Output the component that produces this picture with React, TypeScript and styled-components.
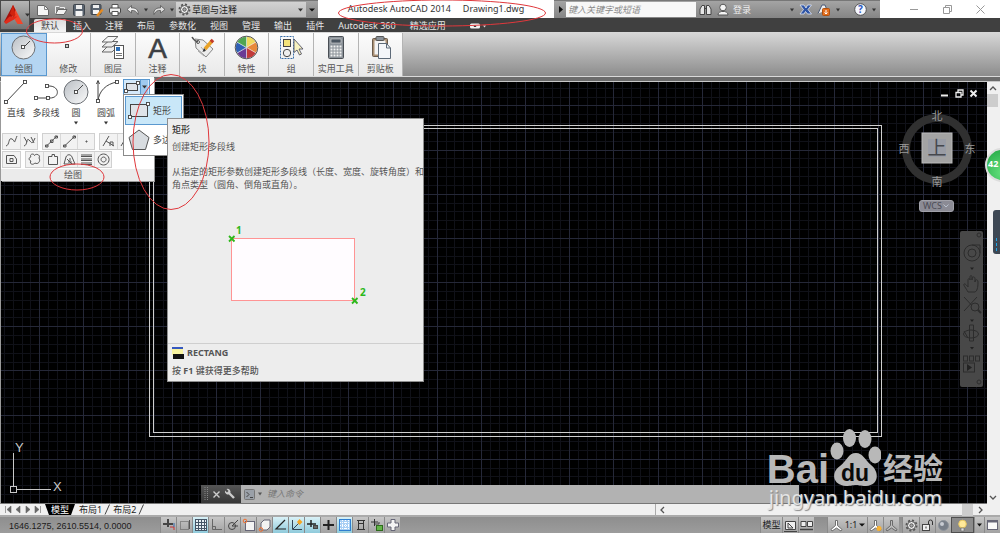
import React from "react";
import styled, { createGlobalStyle, css } from "styled-components";

const Global = createGlobalStyle`
  * { box-sizing: border-box; }
  html, body { margin: 0; padding: 0; }
  body {
    font-family: "Noto Sans", "Noto Sans CJK SC", sans-serif;
    font-size: 9px;
    line-height: 12px;
    color: #333;
    background: #000;
  }
  button, input, select { font: inherit; color: inherit; margin: 0; padding: 0; border: 0; border-radius: 0; }
  button { background: none; }
  svg { display: block; flex: none; }
`;

const chrome = css`
  background: linear-gradient(#a4a4a4, #858585);
`;

const Shell = styled.div`
  position: relative;
  display: flex;
  flex-direction: column;
  min-height: 100vh;
  overflow: hidden;
`;

/* ---------- header ---------- */
const Header = styled.header`
  display: flex;
  background: #404040;
`;
const AppButton = styled.button`
  width: 30px;
  height: 30px;
  flex: none;
  display: flex;
  align-items: center;
  gap: 2px;
  padding-left: 3px;
  border: 1px solid #4a4a4a;
  background: linear-gradient(#b5b5b5, #747474);
`;
const HeaderRows = styled.div`
  flex: 1;
  min-width: 0;
`;
const TitleBar = styled.div`
  display: flex;
  height: 18px;
  background: #fff;
`;
const QuickAccess = styled.div`
  ${chrome}
  display: flex;
  align-items: center;
  width: 288px;
  flex: none;
  border-top: 1px solid #777;
`;
const QuickTools = styled.div`
  display: flex;
  align-items: center;
  gap: 4px;
  width: 146px;
  padding-left: 6px;
`;
const IconButton = styled.button`
  display: flex;
  align-items: center;
  justify-content: center;
`;
const Workspace = styled.label`
  display: flex;
  align-items: center;
  gap: 1px;
  width: 130px;
  height: 15px;
  padding: 0 3px 0 2px;
  background: linear-gradient(#d2d2d2, #bdbdbd);
  select {
    flex: 1;
    min-width: 0;
    height: 13px;
    line-height: 13px;
    appearance: none;
    background: transparent;
    color: #222;
  }
`;
const MoreButton = styled(IconButton)`
  flex: 1;
  height: 17px;
`;
const Title = styled.div`
  flex: 1;
  display: flex;
  justify-content: center;
  gap: 12px;
  line-height: 18px;
  color: #333;
  white-space: nowrap;
`;
const InfoCenter = styled.div`
  ${chrome}
  display: flex;
  align-items: center;
  width: 326px;
  flex: none;
  border-top: 1px solid #777;
`;
const SearchToggle = styled(IconButton)`
  width: 12px;
  height: 15px;
`;
const SearchInput = styled.input`
  width: 130px;
  height: 15px;
  padding-left: 2px;
  background: #f7f7f7;
  font-style: italic;
  &::placeholder { color: #888; opacity: 1; }
`;
const InfoTools = styled.div`
  display: flex;
  flex: 1;
  align-items: center;
  padding: 0 4px 0 3px;
  gap: 5px;
`;
const SignIn = styled.button`
  display: flex;
  flex: 1;
  align-items: center;
  gap: 4px;
  color: #eee;
  white-space: nowrap;
`;
const WindowButtons = styled.div`
  display: flex;
  align-items: center;
  justify-content: space-around;
  width: 120px;
  flex: none;
  padding: 0 3px 0 18px;
`;

const TabRow = styled.nav`
  display: flex;
  height: 14px;
  padding-left: 4px;
  align-items: flex-end;
`;
const Tab = styled.button<{ $active?: boolean }>`
  height: 13px;
  padding: 0 7px;
  line-height: 13px;
  color: #e6e6e6;
  white-space: nowrap;
  ${(p) => p.$active && css`
    color: #444;
    background: linear-gradient(#dcdcdc, #f4f4f4);
    border-radius: 2px 2px 0 0;
  `}
`;

/* ---------- ribbon ---------- */
const Ribbon = styled.div`
  position: relative;
  z-index: 5;
  background: linear-gradient(#d8d8d8, #8c8c8c);
  border-bottom: 1px solid #dadada;
`;
const RibbonPanels = styled.div`
  display: flex;
  width: 403px;
  height: 44px;
  padding: 1px 0 0 1px;
`;
const PanelButton = styled.button<{ $active?: boolean }>`
  flex: 1;
  display: flex;
  flex-direction: column;
  align-items: center;
  justify-content: space-between;
  padding: 2px 0 1px;
  color: #555;
  background: linear-gradient(#fcfcfc, #e9e9e9);
  border-right: 1px solid #b4b4b4;
  ${(p) => p.$active && css`
    background: #b4d5f2;
    border: 1px solid #5a98cf;
    padding: 1px 0 0;
  `}
`;
const RibbonEdge = styled.div`
  height: 5px;
  background: #6c6c6c;
  border-bottom: 1px solid #c8c8c8;
`;

/* ---------- draw panel ---------- */
const DrawPanel = styled.section`
  position: absolute;
  top: 45px;
  left: 1px;
  width: 153px;
  background: #fff;
  box-shadow: 1px 1px 0 #999;
`;
const DrawMain = styled.div`
  display: flex;
  height: 56px;
  padding: 2px 0 0 0;
`;
const BigTool = styled.button`
  display: flex;
  flex-direction: column;
  align-items: center;
  justify-content: flex-start;
  width: 30px;
  gap: 2px;
  color: #444;
  white-space: nowrap;
`;
const SplitButton = styled.button`
  display: flex;
  align-items: center;
  width: 27px;
  height: 16px;
  margin-left: 2px;
  border: 1px solid #5a98cf;
  background: #d4e9fa;
  svg + svg {
    box-sizing: content-box;
    padding: 5px 1px;
    border-left: 1px solid #5a98cf;
    background: #9fcaf0;
  }
`;
const SmallRow = styled.div`
  display: flex;
  gap: 4px;
  height: 18px;
  padding-left: 1px;
`;
const SmallGroup = styled.div`
  display: flex;
  height: 17px;
  border: 1px solid #d0d0d0;
  background: #f2f2f2;
`;
const SmallTool = styled.button`
  display: flex;
  width: 17px;
  align-items: center;
  justify-content: center;
  & + & { border-left: 1px solid #d8d8d8; }
`;
const PanelTitle = styled.div`
  height: 12px;
  padding-right: 9px;
  text-align: center;
  background: #ebebeb;
  color: #555;
`;
const Flyout = styled.div`
  position: absolute;
  top: 62px;
  left: 123px;
  width: 61px;
  padding: 1px;
  background: #fff;
  border: 1px solid #8a8a8a;
`;
const FlyoutItem = styled.button<{ $hot?: boolean }>`
  display: flex;
  align-items: center;
  gap: 3px;
  width: 100%;
  height: 29px;
  padding-left: 3px;
  overflow: hidden;
  white-space: nowrap;
  color: #444;
  ${(p) => p.$hot && css`
    background: #c9e7f8;
    outline: 1px solid #5a98cf;
    outline-offset: -1px;
  `}
`;

/* ---------- tooltip ---------- */
const Tooltip = styled.aside`
  position: absolute;
  top: 86px;
  left: 167px;
  width: 257px;
  background: #ededed;
  border: 1px solid #8e8e8e;
  color: #555;
  h3 { margin: 0; padding: 4px 4px 0; font-size: 9px; line-height: 13px; font-weight: 500; color: #333; }
  p { margin: 0; padding: 4px 0 0 4px; line-height: 13px; }
  p + p { padding-top: 12px; white-space: nowrap; }
`;
const Figure = styled.div`
  height: 152px;
  padding: 30px 0 0 55px;
`;
const TooltipFoot = styled.footer`
  border-top: 1px solid #cfcfcf;
  padding: 3px 4px 4px;
  font-weight: 700;
  color: #555;
  line-height: 12px;
  div { display: flex; align-items: center; gap: 3px; margin-bottom: 6px; }
  span { font-weight: 500; }
`;

/* ---------- workspace ---------- */
const Body = styled.main`
  position: relative;
  display: flex;
  flex: 1;
  min-height: 421px;
`;
const Canvas = styled.div`
  position: relative;
  flex: 1;
  overflow: hidden;
  background: #000;
  border-left: 1px solid #999;
  border-bottom: 1px solid #777;
`;
const Drawing = styled.svg`
  position: absolute;
  width: 100%;
  height: 100%;
`;
const Floating = styled.div<{ $top?: number; $right?: number; $bottom?: number; $left?: number }>`
  position: absolute;
  ${(p) => p.$top !== undefined && `top: ${p.$top}px;`}
  ${(p) => p.$right !== undefined && `right: ${p.$right}px;`}
  ${(p) => p.$bottom !== undefined && `bottom: ${p.$bottom}px;`}
  ${(p) => p.$left !== undefined && `left: ${p.$left}px;`}
`;
const DocButtons = styled(Floating)`
  display: flex;
  gap: 5px;
`;
const Wcs = styled.button`
  display: flex;
  align-items: center;
  justify-content: space-between;
  width: 35px;
  height: 12px;
  padding: 0 4px 0 3px;
  line-height: 10px;
  color: #4c4c55;
  background: #8b8b95;
  border: 1px solid #a2a2aa;
  border-radius: 3px;
`;
const CommandLine = styled.div`
  position: absolute;
  left: 200px;
  right: 188px;
  bottom: 0;
  height: 18px;
  display: flex;
  background: #b2b2b2;
`;
const CommandGrip = styled.div`
  display: flex;
  align-items: center;
  gap: 4px;
  width: 40px;
  padding-left: 3px;
  background: linear-gradient(#565656, #363636);
`;
const GripButton = styled(IconButton)`
  width: 12px;
`;
const CommandField = styled.label`
  flex: 1;
  display: flex;
  align-items: center;
  padding-left: 3px;
  gap: 3px;
  input {
    flex: 1;
    margin-left: 2px;
    background: transparent;
    font-style: italic;
  }
  input::placeholder { color: #777; opacity: 1; }
`;
const Watermark = styled(Floating)`
  z-index: 4;
  color: #b8b8b8;
  font-family: "Liberation Sans", "Noto Sans CJK SC", sans-serif;
  font-weight: 700;
  pointer-events: none;
`;
const Brand = styled.div`
  display: flex;
  align-items: flex-end;
  height: 58px;
  font-size: 40px;
  line-height: 34px;
`;
const BrandCn = styled.span`
  font-size: 30px;
  margin-left: 2px;
`;
const Url = styled.div`
  padding-left: 2px;
  font-family: "Noto Sans", sans-serif;
  font-weight: 400;
  font-size: 20px;
  line-height: 24px;
  color: #e4e4e4;
  text-shadow: 1px 1px 1px #888;
`;
const VScroll = styled.div`
  width: 13px;
  display: flex;
  flex-direction: column;
  align-items: flex-start;
  background: #f0f0f0;
`;
const ScrollButton = styled(IconButton)`
  width: 11px;
  height: 12px;
`;
const Thumb = styled.div`
  width: 11px;
  height: 13px;
  background: #cdcdcd;
`;
const Spacer = styled.div`
  flex: 1;
`;

/* ---------- bottom rows ---------- */
const LayoutRow = styled.div`
  display: flex;
  height: 13px;
  align-items: center;
  background: #f0f0f0;
  border-bottom: 2px solid #aaa;
`;
const LayoutNav = styled.div`
  display: flex;
  width: 45px;
  padding-left: 3px;
`;
const NavButton = styled(IconButton)`
  width: 10px;
  height: 11px;
`;
const LayoutTab = styled.button<{ $active?: boolean }>`
  height: 11px;
  line-height: 11px;
  white-space: nowrap;
  color: #222;
  ${(p) => p.$active && css`
    padding: 0 6px;
    color: #fff;
    background: #000;
    clip-path: polygon(0 0, 100% 0, calc(100% - 4px) 100%, 4px 100%);
  `}
`;
const HScroll = styled.div`
  display: flex;
  align-items: center;
  width: 345px;
  height: 11px;
  margin-left: auto;
  padding-right: 14px;
  border-left: 1px solid #aaa;
`;
const StatusBar = styled.footer`
  display: flex;
  height: 16px;
  background: linear-gradient(#8e8e8e, #9c9c9c);
`;
const Coordinates = styled.output`
  width: 160px;
  padding-left: 9px;
  font-family: "Liberation Sans", sans-serif;
  line-height: 18px;
  color: #1c1c1c;
`;
const StatusButton = styled.button<{ $on?: boolean; $w?: number; $down?: boolean }>`
  display: flex;
  align-items: center;
  justify-content: center;
  gap: 2px;
  width: ${(p) => p.$w ?? 16}px;
  color: #222;
  white-space: nowrap;
  border-left: 1px solid #8a8a8a;
  background: ${(p) => (p.$on ? "linear-gradient(#d9f1f7, #8fcadb)" : p.$down ? "#8b8b8b" : "linear-gradient(#c6c6c6, #a2a2a2)")};
  ${(p) => p.$down && "border: 1px solid #4f4f4f;"}
`;
const StatusGap = styled.div<{ $w: number }>`
  width: ${(p) => p.$w}px;
`;

/* ---------- overlays ---------- */
const Marks = styled.svg`
  position: absolute;
  top: 0;
  left: 0;
  z-index: 10;
  pointer-events: none;
`;
const Ball = styled.div`
  position: absolute;
  top: 148px;
  right: -19px;
  width: 34px;
  height: 34px;
  padding-left: 1px;
  border: 2px solid #ddd;
  border-radius: 50%;
  background: radial-gradient(circle at 50% 75%, #62e07c, #23a644);
  color: #fff;
  font-weight: 700;
  line-height: 28px;
  z-index: 6;
`;
const SideHandle = styled.div`
  position: absolute;
  top: 210px;
  right: 0;
  width: 7px;
  height: 44px;
  padding: 28px 2px 3px 3px;
  border-radius: 3px 0 0 3px;
  background: #3e4854;
  z-index: 6;
  &::after { content: ""; display: block; height: 13px; border-left: 1px dashed #1fa5e8; }
`;

/* ---------- icons ---------- */
type IcoProps = { w?: number; h?: number; children: React.ReactNode };
const Ico = ({ w = 14, h = 14, children }: IcoProps) => (
  <svg width={w} height={h} viewBox={`0 0 ${w} ${h}`} fill="none" stroke="#444" aria-hidden="true">
    {children}
  </svg>
);
const Caret = ({ c = "#333", s = 5 }: { c?: string; s?: number }) => (
  <Ico w={s} h={4}><path d={`M0 0.5H${s}L${s / 2} 3.5Z`} fill={c} stroke="none" /></Ico>
);
const Node = ({ x, y }: { x: number; y: number }) => (
  <rect x={x - 1.5} y={y - 1.5} width="3" height="3" fill="#fff" stroke="#444" strokeWidth=".9" />
);
const DiscFill = () => (
  <defs>
    <linearGradient id="disc" x1="0" y1="0" x2="1" y2="1">
      <stop offset="0" stopColor="#b9bec4" /><stop offset="1" stopColor="#fbfbfb" />
    </linearGradient>
  </defs>
);

const Logo = () => (
  <Ico w={19} h={20}>
    <path d="M9 0L19 19H13.5L9.5 12.500Z" fill="#f2452a" stroke="none" />
    <path d="M9 0L0 17L6.500 14.500L11.500 5Z" fill="#a50f0a" stroke="none" />
    <path d="M0 17L5.500 11.500H13.500L10 14.500L2 19Z" fill="#e02b1a" stroke="none" />
    <path d="M9 0L6 8.500L9.500 12.500L11.500 10Z" fill="#d0230f" stroke="none" />
  </Ico>
);
const quick: React.ReactNode[] = [
  <Ico w={14} h={14}><path d="M1.500 2.500H8.500L12.500 6.500V12.500H1.500Z" fill="#f6f6f6" stroke="#666" /><path d="M8.500 2.500V6.500H12.500" stroke="#888" /></Ico>,
  <Ico w={14} h={14}><path d="M1.500 11.500V3.500H5L6 4.500H10.500V6" stroke="#eee" fill="#888" /><path d="M1.500 11.500L4 6.500H13L10 11.500Z" fill="#f2f2f2" stroke="#666" /></Ico>,
  <Ico w={14} h={14}><rect x="1.500" y="1.500" width="11" height="11" rx="1" fill="#5a6470" stroke="#3f454c" /><rect x="4" y="2" width="6" height="4" fill="#eee" stroke="none" /><rect x="3.500" y="8" width="7" height="5" fill="#f4f4f4" stroke="none" /></Ico>,
  <Ico w={14} h={14}><rect x="1" y="1.500" width="10" height="10" rx="1" fill="#5a6470" stroke="#3f454c" /><rect x="3" y="2" width="6" height="3" fill="#eee" stroke="none" /><rect x="3" y="7" width="6" height="4" fill="#f4f4f4" stroke="none" /><path d="M7 13L12.500 6.500" stroke="#e58a20" strokeWidth="2.500" /></Ico>,
  <Ico w={14} h={14}><path d="M4 5V1.500H10V5" fill="#fff" stroke="#555" /><rect x="1.500" y="5" width="11" height="5" rx="1" fill="#eee" stroke="#444" /><path d="M4 8.500H10V12.500H4Z" fill="#fff" stroke="#555" /></Ico>,
  <Ico w={14} h={14}><path d="M12 11.500C13 6.500 9 4.500 5.500 5V2.500L1 6.500L5.500 10V7.500C8.500 7 10.500 8.500 12 11.500Z" fill="#eee" stroke="#555" strokeWidth=".8" /></Ico>,
];

const DiscIcon = ({ s = 25 }: { s?: number }) => (
  <Ico w={s} h={s}>
    <DiscFill />
    <circle cx={s / 2} cy={s / 2} r={s / 2 - 1} fill="url(#disc)" stroke="#6b6f74" />
    <path d={`M${s / 2} ${s / 2}L${s - 6} 6`} stroke="#444" />
    <Node x={Math.floor(s / 2)} y={Math.floor(s / 2)} />
  </Ico>
);
const panels: { label: string; icon: React.ReactNode }[] = [
  { label: "绘图", icon: <DiscIcon /> },
  { label: "修改", icon: <Ico w={25} h={25}><rect x="9.500" y="9.500" width="3" height="3" fill="#ccc" /></Ico> },
  {
    label: "图层",
    icon: (
      <Ico w={25} h={25}>
        <path d="M2 17L8 11H18L12 17Z" fill="#eee" stroke="#666" /><path d="M2 12L8 6.500H18L12 12Z" fill="#eee" stroke="#666" /><path d="M2 7L8 1.500H18L12 7Z" fill="#f6f6f6" stroke="#666" />
        <rect x="14.500" y="10.500" width="9" height="13" fill="#fff" stroke="#555" /><rect x="16" y="12" width="4" height="4" fill="#2c6fb8" stroke="none" /><path d="M16 18.500H22M16 20.500H22" stroke="#777" />
      </Ico>
    ),
  },
  { label: "注释", icon: <Ico w={25} h={25}><text x="12.500" y="23" textAnchor="middle" fontFamily="Liberation Sans, sans-serif" fontSize="28" fill="#3c3f44" stroke="#3c3f44" strokeWidth=".6">A</text></Ico> },
  {
    label: "块",
    icon: (
      <Ico w={25} h={25}>
        <path d="M5 4L13 5L23 14L16 22L6 13Z" fill="#ececec" stroke="#888" /><circle cx="8" cy="7" r="1.500" fill="#fff" stroke="#555" /><path d="M8 7C5 6 3 4 2 2" stroke="#555" strokeWidth="1.500" />
        <path d="M11 12L15 17M8 16L14 21" stroke="#aaa" /><path d="M15 14L22 6" stroke="#e9a227" strokeWidth="3.500" /><path d="M21 7L23 5" stroke="#c0392b" strokeWidth="3.500" /><path d="M12.500 17L14 13L16 15.500Z" fill="#333" stroke="none" />
      </Ico>
    ),
  },
  {
    label: "特性",
    icon: (
      <Ico w={25} h={25}>
        {["#f0d95c", "#e8893a", "#c23a3a", "#6a3a94", "#2f5fb5", "#4fa552"].map((c, i) => {
          const a = ((i * 60 - 90) * Math.PI) / 180;
          const b = a + Math.PI / 3;
          const pt = (t: number) => `${12.5 + 11 * Math.cos(t)} ${12.5 + 11 * Math.sin(t)}`;
          return <path key={c} d={`M12.5 12.5L${pt(a)}A11 11 0 0 1 ${pt(b)}Z`} fill={c} stroke="#eee" strokeWidth=".5" />;
        })}
        <circle cx="12.500" cy="12.500" r="11.300" stroke="#555" />
      </Ico>
    ),
  },
  {
    label: "组",
    icon: (
      <Ico w={25} h={25}>
        <rect x="1.500" y="1.500" width="13" height="22" stroke="#3a6ea8" strokeDasharray="2 1" /><rect x="4.500" y="4.500" width="7" height="7" fill="#f2e27a" stroke="#444" /><circle cx="8" cy="18" r="3.700" fill="#eee" stroke="#444" />
        <path d="M15 4V17.500L18 15L20.500 20L22.500 19L20 14H24Z" fill="#f7f2c0" stroke="#556" strokeWidth=".9" />
      </Ico>
    ),
  },
  {
    label: "实用工具",
    icon: (
      <Ico w={25} h={25}>
        <rect x="5.500" y="1.500" width="15" height="22" rx="1" fill="#8b9299" stroke="#4a4f55" /><rect x="8" y="4" width="10" height="4" fill="#4a5560" stroke="#ddd" strokeWidth=".6" />
        {[11, 14, 17, 20].map((y) => [8, 11, 14, 17].map((x) => <rect key={`${x}-${y}`} x={x - 0.5} y={y - 0.5} width="2" height="2" fill="#f2f2f2" stroke="none" />))}
      </Ico>
    ),
  },
  {
    label: "剪贴板",
    icon: (
      <Ico w={25} h={25}>
        <rect x="4.500" y="3.500" width="15" height="18" rx="1" fill="#a98f73" stroke="#6a5b4c" /><rect x="6.500" y="5.500" width="11" height="14" fill="#f4f4f4" stroke="none" /><rect x="8" y="1.500" width="8" height="4" rx="1" fill="#8b9299" stroke="#555" />
        <path d="M10.500 8.500H18.500L22.500 13V23.500H10.500Z" fill="#f4f6f9" stroke="#5d6a78" /><path d="M18.500 8.500V13H22.500" stroke="#5d6a78" />
      </Ico>
    ),
  },
];

const bigTools = [
  { label: "直线", arrow: false, icon: <Ico w={26} h={26}><path d="M3 23L22 3" /><Node x={3} y={23} /><Node x={22} y={3} /></Ico> },
  { label: "多段线", arrow: false, icon: <Ico w={26} h={26}><path d="M3 19H17C27 19 27 7 16 7H14" /><Node x={3} y={19} /><Node x={15} y={19} /><Node x={14} y={7} /></Ico> },
  { label: "圆", arrow: true, icon: <DiscIcon s={26} /> },
  { label: "圆弧", arrow: true, icon: <Ico w={26} h={26}><path d="M5 22C6 12 13 5 24 3M5 2V23M3.500 5L5 1.500L6.500 5" /><Node x={5} y={22} /><Node x={24} y={3} /></Ico> },
];
const RectIcon = ({ w, h }: { w: number; h: number }) => (
  <Ico w={w} h={h}>
    <rect x="2.500" y="2.500" width={w - 5} height={h - 5} fill="#dfe3e8" stroke="#444" /><Node x={2} y={h - 2} /><Node x={w - 2} y={2} />
  </Ico>
);

const smallRows: string[][][] = [
  [
    ["M1 11C5 10 3 2 7 4S8 11 12 1", "M1 11C5 10 3 2 6 5S9 10 12 3M1 2L4 7M8 2L11 8"],
    ["M1 11.500L12 1M0.500 10H3V12H0.500ZM5.500 5H8V7.500H5.500ZM10 1H12.500V3H10Z", "M1 11.500L12 1M0.500 10H3V12H0.500ZM10 1H12.500V3H10Z", "M6 6H7V7H6Z"],
    ["M1 11L7 1M4 6L12 11M8 11V7H11V11", "M1 11L7 1M4 6L12 11"],
  ],
  [
    ["M1.500 2.500H9L11.500 6V10.500H1.500ZM5 5.500H8V8.500H5Z"],
    [
      "M3 4C1 1 6 0 6.500 2.500C8 0 13 2 11 5C13 8 10 12 7 10C4 13 1 10 3 8C0 7 1 4 3 4",
      "M2.500 3.500H6V1.500H8.500V3.500H11.500V11.500H2.500Z",
      "M1 11L3 4C4 1 8 1 9 4L12 11ZM4 6L9 11M5 9H9M7 5V8",
      "M1 2H12M1 3.500H12M1 6H12M1 7.500H12M1 10H12M1 11.500H12",
      "M6.500 1A5.500 5.500 0 1 0 6.600 1ZM6.500 4A2.500 2.500 0 1 0 6.600 4Z",
    ],
  ],
];

const StatusIcons: { on?: boolean; el: React.ReactNode }[] = [
  { el: <><path d="M1 6H11M6 1V9" stroke="#444" strokeWidth="2" /><path d="M8 9H12V12" stroke="#c33" /><path d="M12 5V9" stroke="#36a" /></> },
  { el: <><rect x="2.500" y="3.500" width="8" height="8" stroke="#555" strokeDasharray="1 1" /><path d="M11.500 2V11" stroke="#555" /></> },
  { on: true, el: <><rect x="1" y="1" width="12" height="12" fill="#e8f0f4" stroke="none" /><path d="M1.500 1V13M4.500 1V13M7.500 1V13M10.500 1V13M12.500 1V13M1 1.500H13M1 4.500H13M1 7.500H13M1 10.500H13M1 12.500H13" stroke="#455566" /></> },
  { el: <path d="M2.500 1V11.500H12M2.500 8.500H5.500V11.500" stroke="#666" /> },
  { el: <><circle cx="6" cy="8" r="3.500" /><path d="M6 8L12 2M6 8H12" /></> },
  { el: <><rect x="3.500" y="3.500" width="9" height="9" fill="#f3f3f3" stroke="#667" /><circle cx="3" cy="3" r="1.800" stroke="#f07030" /></> },
  { el: <><path d="M3 5L6 2H12V9L9 12H3Z" fill="#f3f3f3" stroke="#667" /><circle cx="3" cy="11.500" r="1.800" stroke="#f07030" /></> },
  { on: true, el: <path d="M11 2L2 11H12" stroke="#222" strokeWidth="1.200" /> },
  { on: true, el: <><path d="M2.500 2V11.500H12M3 11L10 4" stroke="#345" /><path d="M9.500 1L12.500 4L9.500 7L7 4Z" fill="#f5a623" stroke="none" /></> },
  { on: true, el: <><path d="M1 6H10M5 2V9" stroke="#222" strokeWidth="1.500" /><rect x="7.500" y="7.500" width="4" height="3" fill="#666" /></> },
  { el: <path d="M1 7H12M6.500 2V12" stroke="#222" strokeWidth="2" /> },
  { on: true, el: <><rect x="1.500" y="1.500" width="11" height="11" fill="#a8cff5" stroke="#2f7fd0" /><path d="M2 4.500H12M2 7.500H12M2 10.500H12M4.500 2V12M7.500 2V12M10.500 2V12" stroke="#fff" strokeDasharray="1 1" /></> },
  { el: <path d="M3 2.500H11M4.500 2.500V11.500M9.500 2.500V11.500M3 11.500H11M4.500 5.500H9.500" stroke="#333" /> },
  { el: <><path d="M1 4H8M4.500 1V8" stroke="#333" /><path d="M5 6H9V4" /><rect x="6.500" y="7.500" width="6" height="5" fill="#63b548" stroke="#2d6b1c" /></> },
  { el: <path d="M5 1.500H9V5H12.500V9H9V12.500H5V9H1.500V5H5Z" fill="#f4f4f4" stroke="#667" /> },
];
const Gear = () => (
  <Ico w={13} h={13}>
    <circle cx="6.500" cy="6.500" r="5" stroke="#555" strokeWidth="2" strokeDasharray="2 1.900" /><circle cx="6.500" cy="6.500" r="4" fill="#f2f2f2" stroke="#555" /><circle cx="6.500" cy="6.500" r="1.700" fill="#aaa" stroke="#555" />
  </Ico>
);
const ScaleIcon = ({ c = "#fff", star = false }: { c?: string; star?: boolean }) => (
  <Ico w={13} h={13}>
    <path d="M5.500 1.500H7.500V6.500L12 10.500L11 12L6.500 9L2 12L1 10.500L5.500 6.500Z" fill={c} stroke="#555" strokeWidth=".8" />
    {star && <circle cx="10" cy="9.500" r="2.500" fill="#f9b233" stroke="none" />}
  </Ico>
);

const step = 44.17;
const grid = (from: number, count: number) =>
  Array.from({ length: count }, (_, i) => ({ at: from + (i * step) / 5, major: i % 5 === 0 }));
const columns = grid(-4.5, 330);
const rows = grid(61.8, 200);

const tabs = ["默认", "插入", "注释", "布局", "参数化", "视图", "管理", "输出", "插件", "Autodesk 360", "精选应用"];

export default function App() {
  return (
    <Shell>
      <Global />
      <Header>
        <AppButton aria-label="应用程序"><Logo /><Caret s={5} /></AppButton>
        <HeaderRows>
          <TitleBar>
            <QuickAccess>
              <QuickTools>
                {quick.map((q, i) => <IconButton key={i} aria-label={`工具 ${i + 1}`}>{q}</IconButton>)}
                <Caret s={4} />
                <IconButton aria-label="重做">
                  <Ico w={14} h={14}><path d="M2 11.500C1 6.500 5 4.500 8.500 5V2.500L13 6.500L8.500 10V7.500C5.500 7 3.500 8.500 2 11.500Z" fill="#ddd" stroke="#555" strokeWidth=".8" /></Ico>
                </IconButton>
                <Caret s={4} />
              </QuickTools>
              <Workspace>
                <Gear />
                <select aria-label="工作空间"><option>草图与注释</option></select>
                <Caret s={5} />
              </Workspace>
              <MoreButton aria-label="自定义"><Caret s={6} c="#111" /></MoreButton>
            </QuickAccess>
            <Title><span>Autodesk AutoCAD 2014</span><span>Drawing1.dwg</span></Title>
            <InfoCenter>
              <SearchToggle aria-label="展开"><Ico w={5} h={7}><path d="M1 0L5 3.500L1 7Z" fill="#111" stroke="none" /></Ico></SearchToggle>
              <SearchInput aria-label="搜索" placeholder="键入关键字或短语" />
              <InfoTools>
                <IconButton aria-label="查找"><Ico w={13} h={13}><path d="M1 11.500V6L3 2.500H5.500V11.500ZM7.500 11.500V2.500H10L12 6V11.500ZM5 5.500H8" fill="#e6e6e6" stroke="#444" /></Ico></IconButton>
                <SignIn>
                  <Ico w={12} h={13}><circle cx="6" cy="4.500" r="3.300" fill="#f4f4f4" stroke="#555" /><path d="M1 12C1 9 3.500 9 4.500 8.500H7.500C8.500 9 11 9 11 12Z" fill="#f4f4f4" stroke="#555" /></Ico>
                  登录
                </SignIn>
                <Caret s={4} />
                <IconButton aria-label="Exchange"><Ico w={13} h={13}><path d="M1 2H5L7 5L8.500 2H12.500L9 6.500L12.500 11H8.500L6.500 8.500L5 11H1L4.500 6.500Z" fill="#2f55a5" stroke="#dfe6f5" strokeWidth=".8" /></Ico></IconButton>
                <IconButton aria-label="连接"><Ico w={14} h={13}><path d="M1 10.500L5 2H8L10 7" fill="#eee" stroke="#4a5a78" /><rect x="5.500" y="5.500" width="7" height="7" rx="1" fill="#e4701e" stroke="#b14f0c" /><path d="M9 7V11M7.500 9.500L9 11L10.500 9.500" stroke="#fff" /></Ico></IconButton>
                <Caret s={4} />
                <StatusGap $w={4} />
                <IconButton aria-label="帮助"><Ico w={13} h={13}><circle cx="6.500" cy="6.500" r="5.800" fill="#f6f8ff" stroke="#555" /><text x="6.500" y="10" fontSize="10" fontWeight="700" textAnchor="middle" fill="#2a57c0" stroke="none">?</text></Ico></IconButton>
                <Caret s={4} />
              </InfoTools>
            </InfoCenter>
            <WindowButtons>
              <IconButton aria-label="最小化"><Ico w={9} h={9}><path d="M0 4.500H8" stroke="#999" /></Ico></IconButton>
              <IconButton aria-label="还原"><Ico w={9} h={9}><path d="M0.500 2.500H6.500V8.500H0.500ZM2.500 2V0.500H8.500V6.500H7" stroke="#999" /></Ico></IconButton>
              <IconButton aria-label="关闭"><Ico w={9} h={9}><path d="M0.500 0.500L8.500 8.500M8.500 0.500L0.500 8.500" stroke="#999" /></Ico></IconButton>
            </WindowButtons>
          </TitleBar>
          <TabRow>
            {tabs.map((t, i) => <Tab key={t} $active={i === 0}>{t}</Tab>)}
            <Tab aria-label="最小化功能区">
              <Ico w={26} h={12}><rect x="10" y="3.500" width="10" height="5" rx="1.500" fill="#f2f2f2" stroke="none" /><path d="M13.500 7L15 5L16.500 7Z" fill="#333" stroke="none" /><path d="M23 5.500H26L24.500 7.500Z" fill="#ddd" stroke="none" /></Ico>
            </Tab>
          </TabRow>
        </HeaderRows>
      </Header>

      <Ribbon>
        <RibbonPanels>
          {panels.map((p, i) => <PanelButton key={p.label} $active={i === 0}>{p.icon}{p.label}</PanelButton>)}
        </RibbonPanels>
        <DrawPanel>
          <DrawMain>
            {bigTools.map((t) => (
              <BigTool key={t.label}>{t.icon}<span>{t.label}</span>{t.arrow && <Caret s={4} />}</BigTool>
            ))}
            <SplitButton aria-label="矩形工具"><RectIcon w={16} h={12} /><Caret s={5} /></SplitButton>
          </DrawMain>
          {smallRows.map((groups, r) => (
            <SmallRow key={r}>
              {groups.map((g, i) => (
                <SmallGroup key={i}>
                  {g.map((d) => <SmallTool key={d} aria-label="绘图工具"><Ico w={13} h={13}><path d={d} stroke="#555" /></Ico></SmallTool>)}
                </SmallGroup>
              ))}
            </SmallRow>
          ))}
          <PanelTitle>绘图</PanelTitle>
        </DrawPanel>
        <Flyout>
          <FlyoutItem $hot><RectIcon w={22} h={17} />矩形</FlyoutItem>
          <FlyoutItem>
            <Ico w={22} h={22}><path d="M11 1L21 8.500L17.500 20.500H4.500L1 8.500Z" fill="#d8dce0" stroke="#555" /></Ico>多边形
          </FlyoutItem>
        </Flyout>
        <Tooltip>
          <h3>矩形</h3>
          <p>创建矩形多段线</p>
          <p>从指定的矩形参数创建矩形多段线（长度、宽度、旋转角度）和<br />角点类型（圆角、倒角或直角）。</p>
          <Figure>
            <Ico w={150} h={90}>
              <rect x="8.500" y="17.500" width="123" height="62" fill="#fffcff" stroke="#ff9494" />
              <path d="M6 15L11.500 20.500M11.500 15L6 20.500M129 77L134.500 82.500M134.500 77L129 82.500" stroke="#2db81a" strokeWidth="1.800" />
              <g fontSize="10" fontWeight="700" fill="#2db81a" stroke="none"><text x="13" y="13">1</text><text x="137" y="75">2</text></g>
            </Ico>
          </Figure>
          <TooltipFoot>
            <div>
              <Ico w={12} h={12}><rect x="0" y="0" width="11" height="8" fill="#f7f3a0" stroke="none" /><rect x="0" y="0" width="11" height="2" fill="#3558c0" stroke="none" /><rect x="1" y="7" width="11" height="5" fill="#111" stroke="none" /></Ico>
              RECTANG
            </div>
            <span>按 </span>F1<span> 键获得更多帮助</span>
          </TooltipFoot>
        </Tooltip>
      </Ribbon>
      <RibbonEdge />

      <Body>
        <Canvas>
          <Drawing>
            <g transform="translate(-1 -82)">
              <g shapeRendering="crispEdges">
                {[false, true].map((m) => (
                  <g key={String(m)} stroke={m ? "#252838" : "#101118"}>
                    {columns.filter((c) => c.major === m).map((c) => <path key={c.at} d={`M${c.at} 0V2000`} />)}
                    {rows.filter((c) => c.major === m).map((c) => <path key={c.at} d={`M0 ${c.at}H3000`} />)}
                  </g>
                ))}
              </g>
              <g fill="none" stroke="#cfcfcf">
                <rect x="149.500" y="125.500" width="732" height="311" /><rect x="153.500" y="128.500" width="724" height="304" />
              </g>
            </g>
          </Drawing>
          <Floating $left={6} $bottom={4}>
            <Ico w={60} h={60}>
              <g stroke="#c8c8c8"><path d="M6.500 14V47M10 50.500H44" /><rect x="3.500" y="47.500" width="6" height="6" /></g>
              <g fill="#c8c8c8" stroke="none" fontFamily="Liberation Sans, sans-serif" fontSize="13"><text x="8" y="13">Y</text><text x="46" y="52">X</text></g>
            </Ico>
          </Floating>
          <DocButtons $top={7} $right={9}>
            <IconButton aria-label="最小化图形"><Ico w={9} h={9}><path d="M0 6.500H7" stroke="#eee" strokeWidth="2" /></Ico></IconButton>
            <IconButton aria-label="还原图形"><Ico w={9} h={9}><path d="M1 3.500H6V8H1ZM3 3V1H8V6H6" stroke="#eee" strokeWidth="1.300" /></Ico></IconButton>
            <IconButton aria-label="关闭图形"><Ico w={9} h={9}><path d="M1.500 1.500L7.500 7.500M7.500 1.500L1.500 7.500" stroke="#eee" strokeWidth="2" /></Ico></IconButton>
          </DocButtons>
          <Floating $top={24} $right={8}>
            <Ico w={84} h={88}>
              <circle cx="42" cy="43" r="31" stroke="#303030" strokeWidth="8" />
              <rect x="27" y="27" width="30" height="30" fill="#a3a3a3" stroke="#bbb" /><rect x="33" y="33" width="18" height="18" fill="#999ca5" stroke="none" />
              <g stroke="none" fill="#999" textAnchor="middle" fontSize="11"><text x="42" y="14">北</text><text x="42" y="80">南</text><text x="9" y="47">西</text><text x="75" y="47">东</text></g>
              <text x="42" y="49" textAnchor="middle" fontSize="19" fill="#45474d" stroke="none">上</text>
            </Ico>
          </Floating>
          <Floating $top={118} $right={33}><Wcs>WCS <Ico w={6} h={4}><path d="M0.500 0.500L3 3L5.500 0.500" stroke="#b8c0cc" /></Ico></Wcs></Floating>
          <Floating $top={149} $right={4}>
            <Ico w={23} h={156}>
              <rect width="23" height="156" rx="2" fill="#484848" stroke="none" />
              <g stroke="#2c2c2c">
                <circle cx="19" cy="4" r="2" /><circle cx="19" cy="151" r="2" />
                <circle cx="12" cy="22" r="8" /><circle cx="12" cy="22" r="4" /><path d="M12 14H20V22" />
                <path d="M8 61C6 57 3 54 4 53S8 56 8 56V49C8 47 10 47 10 49V46C10 44 12 44 12 46V49C12 45 15 45 15 48V51C15 48 18 48 18 51C18 57 17 60 15 61Z" />
                <path d="M4 66L17 80M17 66L4 80" /><circle cx="15" cy="76" r="4" fill="#484848" /><path d="M18 79L21 82" strokeWidth="2" />
                <ellipse cx="11" cy="103" rx="7.500" ry="4" /><path d="M9.500 94H13.500V110H9.500ZM4 100L8 107" />
                <rect x="3.500" y="125" width="4" height="5" /><rect x="9.500" y="125" width="4" height="5" /><rect x="15.500" y="125" width="4" height="5" /><rect x="3.500" y="132" width="11" height="9" />
              </g>
              <path d="M10 36.500H14L12 39ZM10 88.500H14L12 91ZM10 116H14L12 118.500ZM7 133L12 136.500L7 140Z" fill="#222" stroke="none" />
            </Ico>
          </Floating>
          <CommandLine>
            <CommandGrip>
              <Ico w={5} h={14}><path d="M1 0V14M3.500 0V14" stroke="#888" strokeDasharray="1 1" /></Ico>
              <IconButton aria-label="关闭命令行"><Ico w={7} h={7}><path d="M0.500 0.500L6.500 6.500M6.500 0.500L0.500 6.500" stroke="#ccc" strokeWidth="1.400" /></Ico></IconButton>
              <GripButton aria-label="自定义命令行"><Ico w={12} h={12}><path d="M5 5L10 10" stroke="#ccc" strokeWidth="2.400" /><path d="M1 2.500L3 4.500L4.500 3L2.500 1A3 3 0 0 1 6 5.500A3 3 0 0 1 1 2.500Z" fill="#ccc" stroke="none" /></Ico></GripButton>
            </CommandGrip>
            <CommandField>
              <Ico w={11} h={11}><rect x="0.500" y="0.500" width="10" height="10" rx="1" fill="#9aa0a8" stroke="#777" /><path d="M2.500 3L5 5.500L2.500 8M6 8.500H9" stroke="#444" /></Ico>
              <Caret s={4} c="#555" />
              <input aria-label="命令" placeholder="键入命令" />
            </CommandField>
          </CommandLine>
        </Canvas>
        <VScroll>
          <ScrollButton aria-label="向上"><Ico w={8} h={6}><path d="M1 5L4 2L7 5" stroke="#555" strokeWidth="1.300" /></Ico></ScrollButton>
          <Thumb />
          <Spacer />
          <ScrollButton aria-label="向下"><Ico w={8} h={6}><path d="M1 1L4 4L7 1" stroke="#555" strokeWidth="1.300" /></Ico></ScrollButton>
        </VScroll>
        <Watermark $right={57} $bottom={-6}>
          <Brand>
            Bai
            <Ico w={52} h={58}>
              <g fill="#b8b8b8" stroke="none">
                <ellipse cx="8" cy="23" rx="6.500" ry="8.500" /><ellipse cx="20.500" cy="10" rx="6.500" ry="9" /><ellipse cx="36" cy="11" rx="6.500" ry="9" /><ellipse cx="46" cy="27" rx="6.500" ry="8.500" />
                <path d="M27 25C34 25 36 32 42 37C50 43 51 57 37 58C31 58 29 57 27 57C24 57 22 58 17 58C3 57 2 44 11 38C18 33 19 25 27 25Z" />
              </g>
              <text x="26" y="53" textAnchor="middle" fontSize="23" fill="#0a0a0a" stroke="none" fontFamily="Liberation Sans, sans-serif">du</text>
            </Ico>
            <BrandCn>经验</BrandCn>
          </Brand>
          <Url>jingyan.baidu.com</Url>
        </Watermark>
      </Body>

      <LayoutRow>
        <LayoutNav>
          {["M2.500 1V8M8 1V8L4 4.500Z", "M7 1V8L3 4.500Z", "M3 1V8L7 4.500Z", "M7.500 1V8M2 1V8L6 4.500Z"].map((d) => (
            <NavButton key={d} aria-label="切换布局"><Ico w={10} h={9}><path d={d} fill="#666" stroke="#666" strokeWidth=".6" /></Ico></NavButton>
          ))}
        </LayoutNav>
        <LayoutTab $active>模型</LayoutTab>
        <StatusGap $w={4} />
        <LayoutTab>布局1</LayoutTab>
        <Ico w={11} h={11}><path d="M3 10.500L7.500 0.500" /></Ico>
        <LayoutTab>布局2</LayoutTab>
        <Ico w={11} h={11}><path d="M3 10.500L7.500 0.500" /></Ico>
        <HScroll>
          <ScrollButton aria-label="向左"><Ico w={6} h={8}><path d="M5 1L2 4L5 7" stroke="#555" strokeWidth="1.300" /></Ico></ScrollButton>
          <Spacer />
          <Thumb />
          <StatusGap $w={2} />
          <ScrollButton aria-label="向右"><Ico w={6} h={8}><path d="M1 1L4 4L1 7" stroke="#555" strokeWidth="1.300" /></Ico></ScrollButton>
        </HScroll>
      </LayoutRow>

      <StatusBar>
        <Coordinates>1646.1275, 2610.5514, 0.0000</Coordinates>
        {StatusIcons.map((s, i) => (
          <StatusButton key={i} $on={s.on} aria-label={`状态 ${i + 1}`}><Ico w={14} h={14}>{s.el}</Ico></StatusButton>
        ))}
        <Spacer />
        <StatusButton $w={22}>模型</StatusButton>
        <StatusButton aria-label="图纸"><Ico w={13} h={13}><path d="M1.500 2.500H11.500V10.500H1.500Z" fill="#eee" /><path d="M4 4V9H9ZM0 12.500H13" stroke="#444" /></Ico></StatusButton>
        <StatusButton aria-label="快速查看"><Ico w={13} h={13}><path d="M1 2.500H6V7.500H1ZM7.500 2.500H12.500V7.500H7.500Z" fill="#eee" /><path d="M0 10.500H13" stroke="#444" strokeWidth="1.500" /></Ico></StatusButton>
        <StatusGap $w={13} />
        <StatusButton $w={40}><ScaleIcon /><span>1:1</span><Caret s={6} c="#111" /></StatusButton>
        <StatusButton aria-label="注释可见性"><ScaleIcon star /></StatusButton>
        <StatusButton aria-label="自动缩放"><ScaleIcon c="#bbb" /></StatusButton>
        <StatusGap $w={3} />
        <StatusButton $w={17} aria-label="切换工作空间"><Gear /></StatusButton>
        <StatusButton aria-label="锁定"><Ico w={13} h={13}><rect x="1.500" y="5.500" width="7" height="6" fill="#eee" /><path d="M7.500 5V3A2 2 0 0 1 11.500 3V6M5 7.500V9.500" stroke="#333" /></Ico></StatusButton>
        <StatusButton aria-label="硬件加速"><Ico w={13} h={13}><circle cx="6.500" cy="6.500" r="5" fill="#777e88" stroke="#8e949c" /><circle cx="5" cy="5" r="2" fill="#c8ccd2" stroke="none" /></Ico></StatusButton>
        <StatusButton $w={23} $down aria-label="隔离对象"><Ico w={13} h={13}><circle cx="6.500" cy="5" r="3.800" fill="#ffe99a" stroke="#e8c860" /><rect x="5" y="9" width="3" height="3" fill="#ddd" stroke="#666" strokeWidth=".6" /></Ico></StatusButton>
        <StatusButton $w={10} aria-label="状态栏菜单"><Caret s={5} c="#111" /></StatusButton>
        <StatusButton aria-label="全屏显示"><Ico w={13} h={13}><rect x="1.500" y="1.500" width="10" height="9" fill="#fafafa" stroke="#667" /><path d="M1 2.500H12" stroke="#667" strokeWidth="2" /></Ico></StatusButton>
      </StatusBar>

      <Ball>42</Ball>
      <SideHandle />
      <Marks width="560" height="220" fill="none" stroke="#e0383c">
        <ellipse cx="54.500" cy="31" rx="28" ry="12" />
        <ellipse cx="442" cy="13" rx="103.500" ry="13" />
        <ellipse cx="77" cy="177" rx="27" ry="13" />
        <ellipse cx="171" cy="142" rx="38" ry="67.500" />
      </Marks>
    </Shell>
  );
}
